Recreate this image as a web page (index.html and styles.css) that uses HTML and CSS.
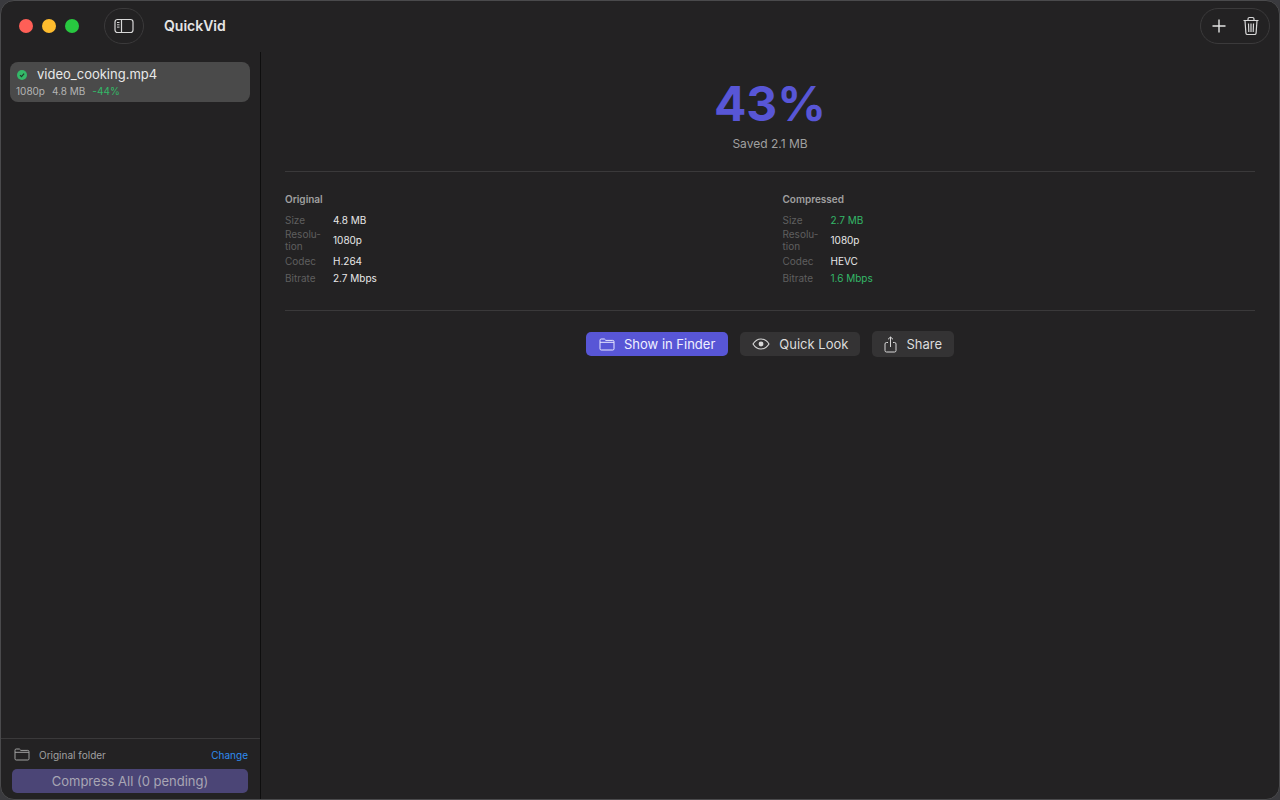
FILE: index.html
```html
<!DOCTYPE html>
<html lang="en">
<head>
  <meta charset="UTF-8">
  <title>QuickVid</title>
  <link rel="stylesheet" href="styles.css">
</head>
<body>
  <div class="window">
    <header class="toolbar">
      <div class="traffic">
        <span class="light red"></span>
        <span class="light yellow"></span>
        <span class="light green"></span>
      </div>
      <button class="sidebar-toggle">
        <svg width="20" height="16" viewBox="0 0 20 16" fill="none" stroke="#d8d8d8" stroke-width="1.2">
          <rect x="1" y="1.5" width="18" height="13" rx="2.5"/>
          <path d="M7.5 1.5v13"/>
          <path d="M3 4.5h2.5M3 6.8h2.5M3 9.1h2.5" stroke-width="1"/>
        </svg>
      </button>
      <span class="app-title">QuickVid</span>
      <div class="toolbar-actions">
        <svg width="16" height="16" viewBox="0 0 16 16" fill="none" stroke="#e4e4e4" stroke-width="1.4">
          <path d="M8 1.5v13M1.5 8h13"/>
        </svg>
        <svg width="18" height="20" viewBox="0 0 18 20" fill="none" stroke="#d8d8d8" stroke-width="1.2">
          <path d="M1.5 4.5h15"/>
          <path d="M6 4.5V3a1.5 1.5 0 0 1 1.5-1.5h3A1.5 1.5 0 0 1 12 3v1.5"/>
          <path d="M3 4.5l.9 12.6a1.6 1.6 0 0 0 1.6 1.4h7a1.6 1.6 0 0 0 1.6-1.4L15 4.5"/>
          <path d="M6.5 7.5l.3 8.5M9 7.5V16M11.5 7.5l-.3 8.5"/>
        </svg>
      </div>
    </header>

    <div class="content">
      <aside class="sidebar">
        <div class="file-list">
          <div class="file-row">
            <div class="file-name">
              <svg class="check" width="10" height="10" viewBox="0 0 10 10">
                <circle cx="5" cy="5" r="5" fill="#34b868"/>
                <path d="M3 5.2l1.5 1.5L7.1 3.6" fill="none" stroke="#1f3d2b" stroke-width="1.2"/>
              </svg>
              <span>video_cooking.mp4</span>
            </div>
            <div class="file-meta">
              <span>1080p</span>
              <span>4.8 MB</span>
              <span class="green">-44%</span>
            </div>
          </div>
        </div>
        <div class="sidebar-footer">
          <div class="folder-row">
            <svg width="16" height="13" viewBox="0 0 16 13" fill="none" stroke="#a0a0a0" stroke-width="1">
              <path d="M1 3V2.2A1.2 1.2 0 0 1 2.2 1h3.2l1.4 1.4h7A1.2 1.2 0 0 1 15 3.6v7.2a1.2 1.2 0 0 1-1.2 1.2H2.2A1.2 1.2 0 0 1 1 10.800z"/>
              <path d="M1 4.300h14"/>
            </svg>
            <span class="folder-label">Original folder</span>
            <span class="change">Change</span>
          </div>
          <button class="compress">Compress All (0 pending)</button>
        </div>
      </aside>

      <main class="detail">
        <section class="savings">
          <div class="percent">43%</div>
          <div class="saved">Saved 2.1 MB</div>
        </section>

        <section class="compare">
          <div class="col">
            <h4>Original</h4>
            <div class="stat"><span class="key">Size</span><span class="val">4.8 MB</span></div>
            <div class="stat"><span class="key">Resolu-<br>tion</span><span class="val">1080p</span></div>
            <div class="stat"><span class="key">Codec</span><span class="val">H.264</span></div>
            <div class="stat"><span class="key">Bitrate</span><span class="val">2.7 Mbps</span></div>
          </div>
          <div class="col">
            <h4>Compressed</h4>
            <div class="stat"><span class="key">Size</span><span class="val green">2.7 MB</span></div>
            <div class="stat"><span class="key">Resolu-<br>tion</span><span class="val">1080p</span></div>
            <div class="stat"><span class="key">Codec</span><span class="val">HEVC</span></div>
            <div class="stat"><span class="key">Bitrate</span><span class="val green">1.6 Mbps</span></div>
          </div>
        </section>

        <section class="actions">
          <button class="btn primary">
            <svg width="16" height="13" viewBox="0 0 16 13" fill="none" stroke="#e8e8ff" stroke-width="1">
              <path d="M1 3V2.200A1.200 1.200 0 0 1 2.200 1h3.200l1.400 1.400h7A1.200 1.200 0 0 1 15 3.600v7.200a1.200 1.200 0 0 1-1.200 1.200H2.200A1.200 1.200 0 0 1 1 10.800z"/>
              <path d="M1 4.300h14"/>
            </svg>
            Show in Finder
          </button>
          <button class="btn">
            <svg width="18" height="12" viewBox="0 0 18 12" fill="none" stroke="#d8d8d8" stroke-width="1.100">
              <path d="M1 6c2-3.200 4.800-5 8-5s6 1.800 8 5c-2 3.200-4.800 5-8 5s-6-1.800-8-5z"/>
              <circle cx="9" cy="6" r="2.400" fill="#d8d8d8" stroke="none"/>
            </svg>
            Quick Look
          </button>
          <button class="btn share">
            <svg width="13" height="17" viewBox="0 0 13 17" fill="none" stroke="#d8d8d8" stroke-width="1">
              <path d="M4 6.500H2.500A1.500 1.500 0 0 0 1 8v6.500A1.500 1.500 0 0 0 2.500 16h8a1.500 1.500 0 0 0 1.500-1.500V8a1.500 1.500 0 0 0-1.500-1.500H9"/>
              <path d="M6.500 11V1M4 3.300L6.500 1 9 3.300"/>
            </svg>
            Share
          </button>
        </section>
      </main>
    </div>
  </div>
</body>
</html>
```
FILE: styles.css
```css
* {
  box-sizing: border-box;
}
body {
  margin: 0;
  width: 1280px;
  height: 800px;
  overflow: hidden;
  background: #3a3a3e;
  font-family: 'Inter', 'Liberation Sans', sans-serif;
  color: #e8e8e8;
}
button {
  font-family: inherit;
  border: none;
}
.window {
  width: 1280px;
  height: 800px;
  background: #232223;
  border: 1px solid #4a4a4c;
  border-radius: 14px;
  overflow: hidden;
  display: flex;
  flex-direction: column;
}
.toolbar {
  height: 51px;
  flex-shrink: 0;
  display: flex;
  align-items: center;
  padding: 0 9px 2px 18px;
}
.traffic {
  display: flex;
  gap: 9px;
}
.light {
  width: 14px;
  height: 14px;
  border-radius: 50%;
}
.red { background: #ff5f57; }
.yellow { background: #febc2e; }
.green-light { background: #28c840; }
.traffic .green { background: #28c840; }
.sidebar-toggle {
  margin-left: 25px;
  width: 40px;
  height: 36px;
  border-radius: 18px;
  background: transparent;
  border: 1px solid #3b3a3b;
  display: flex;
  align-items: center;
  justify-content: center;
  padding: 0;
}
.app-title {
  margin-left: 20px;
  font-size: 14px;
  font-weight: 600;
  color: #e6e6e6;
}
.toolbar-actions {
  margin-left: auto;
  width: 70px;
  height: 36px;
  border-radius: 18px;
  border: 1px solid #3b3a3b;
  display: flex;
  align-items: center;
  justify-content: space-between;
  padding: 0 9px 0 10px;
}
.content {
  flex: 1;
  display: flex;
  min-height: 0;
}
.sidebar {
  width: 260px;
  flex-shrink: 0;
  border-right: 1px solid #0e0e0e;
  display: flex;
  flex-direction: column;
}
.file-list {
  flex: 1;
  padding: 10px 10px 0 9px;
}
.file-row {
  height: 40px;
  background: #4a4a4a;
  border-radius: 8px;
  padding: 5px 6px;
}
.file-name {
  display: flex;
  align-items: center;
  gap: 10px;
  font-size: 13px;
  line-height: 15px;
  color: #e8e8e8;
}
.check {
  margin-left: 1px;
}
.file-meta {
  display: flex;
  gap: 7px;
  margin-top: 3px;
  font-size: 10px;
  line-height: 12px;
  color: #b4b4b4;
}
span.green,
.val.green {
  color: #34b868;
}
.sidebar-footer {
  border-top: 1px solid #3a393a;
  height: 61px;
  padding: 0 12px 0 11px;
}
.folder-row {
  height: 29px;
  display: flex;
  align-items: center;
  padding: 0 0 0 2px;
  font-size: 10px;
  margin-top: 1px;
}
.folder-label {
  margin-left: 9px;
  color: #a0a0a0;
}
.change {
  margin-left: auto;
  color: #2f8cf0;
}
.compress {
  display: block;
  width: 236px;
  height: 24px;
  border-radius: 5px;
  background: #4b4576;
  color: #a8a6b4;
  font-size: 13px;
  padding: 0;
}
.detail {
  flex: 1;
  padding: 0 24px;
}
.savings {
  height: 120px;
  border-bottom: 1px solid #3a393a;
  text-align: center;
  padding-top: 23px;
}
.percent {
  font-size: 48px;
  line-height: 58px;
  font-weight: 700;
  color: #5856d6;
}
.saved {
  font-size: 12px;
  line-height: 14px;
  margin-top: 4px;
  color: #a0a0a0;
}
.compare {
  height: 139px;
  border-bottom: 1px solid #3a393a;
  display: grid;
  grid-template-columns: 1fr 1fr;
  column-gap: 25px;
  padding-top: 20px;
}
.col h4 {
  margin: 0 0 5px;
  font-size: 10px;
  line-height: 14px;
  font-weight: 600;
  color: #a0a0a0;
}
.stat {
  display: flex;
  align-items: center;
  min-height: 17px;
  font-size: 10px;
  line-height: 12px;
}
.key {
  width: 48px;
  color: #5f5f5f;
}
.val {
  color: #e8e8e8;
}
.actions {
  display: flex;
  justify-content: center;
  align-items: center;
  gap: 12px;
  padding-top: 20px;
}
.btn {
  display: flex;
  align-items: center;
  gap: 9px;
  height: 24px;
  padding: 0 12px;
  border-radius: 5px;
  background: #343334;
  color: #dcdcdc;
  font-size: 13px;
}
.btn.primary {
  background: #5856d6;
  color: #f0f0ff;
  padding: 0 13px;
}
.btn.share {
  height: 26px;
}
```
